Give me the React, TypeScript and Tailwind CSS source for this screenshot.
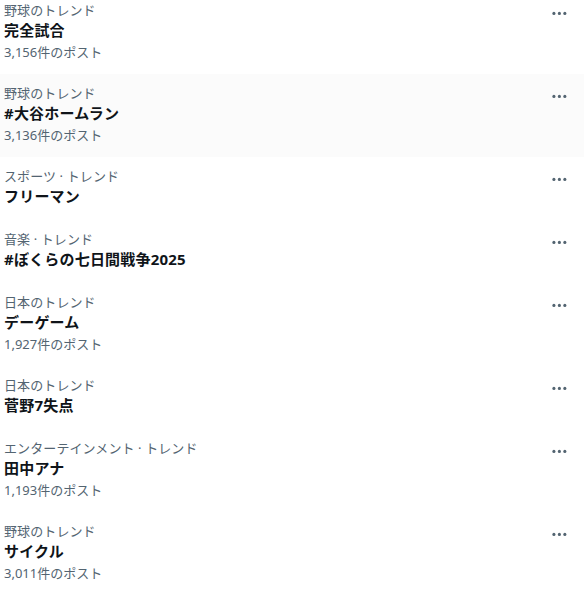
const trends = [
  { category: "野球のトレンド", title: "完全試合", count: "3,156件のポスト" },
  { category: "野球のトレンド", title: "#大谷ホームラン", count: "3,136件のポスト", hover: true },
  { category: "スポーツ · トレンド", title: "フリーマン" },
  { category: "音楽 · トレンド", title: "#ぼくらの七日間戦争2025" },
  { category: "日本のトレンド", title: "デーゲーム", count: "1,927件のポスト" },
  { category: "日本のトレンド", title: "菅野7失点" },
  { category: "エンターテインメント · トレンド", title: "田中アナ", count: "1,193件のポスト" },
  { category: "野球のトレンド", title: "サイクル", count: "3,011件のポスト" },
]

type Trend = {
  category: string
  title: string
  count?: string
  hover?: boolean
}

const MoreIcon = () => (
  <svg viewBox="0 0 24 24" className="w-[18.75px] h-[18.75px] fill-[#536471]">
    <circle cx="5" cy="12" r="2" />
    <circle cx="12" cy="12" r="2" />
    <circle cx="19" cy="12" r="2" />
  </svg>
)

const TrendRow = ({ trend }: { trend: Trend }) => (
  <div
    className={`flex items-start justify-between pl-[4px] pr-[15px] pt-[11px] pb-[12px] ${
      trend.hover ? "bg-[#fbfbfb]" : "bg-white"
    }`}
  >
    <div className="flex flex-col">
      <span className="text-[13px] leading-4 text-[#536471] tracking-[0.1px]">{trend.category}</span>
      <span className="text-[15px] leading-[23px] pt-[1px] font-bold text-[#0f1419] tracking-[0.2px]">
        {trend.title}
      </span>
      {trend.count && (
        <span className="text-[13px] leading-4 pt-[2px] pb-[2px] text-[#536471]">{trend.count}</span>
      )}
    </div>
    <div className="mt-[2px]">
      <MoreIcon />
    </div>
  </div>
)

export default function App() {
  return (
    <div
      className="w-[584px] h-[599px] overflow-hidden bg-white"
      style={{ fontFamily: '"Noto Sans", "Noto Sans CJK JP", sans-serif' }}
    >
      <div className="-mt-[9px] flex flex-col">
        {trends.map((t, i) => (
          <TrendRow key={i} trend={t} />
        ))}
      </div>
    </div>
  )
}
